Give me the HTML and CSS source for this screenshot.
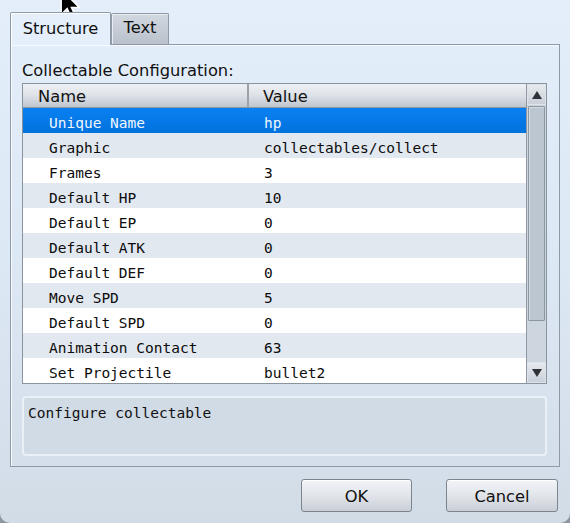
FILE: index.html
```html
<!DOCTYPE html>
<html>
<head>
<meta charset="utf-8">
<link rel="stylesheet" href="styles.css">
</head>
<body>
<div class="window">
  <div class="tabs">
    <div class="tab active">Structure</div>
    <div class="tab">Text</div>
  </div>
  <div class="panel">
    <div class="label">Collectable Configuration:</div>
    <div class="table">
      <div class="list">
        <div class="header">
          <div class="hcell name">Name</div>
          <div class="hcell value">Value</div>
        </div>
        <div class="row selected"><span class="c1">Unique Name</span><span class="c2">hp</span></div>
        <div class="row alt"><span class="c1">Graphic</span><span class="c2">collectables/collect</span></div>
        <div class="row"><span class="c1">Frames</span><span class="c2">3</span></div>
        <div class="row alt"><span class="c1">Default HP</span><span class="c2">10</span></div>
        <div class="row"><span class="c1">Default EP</span><span class="c2">0</span></div>
        <div class="row alt"><span class="c1">Default ATK</span><span class="c2">0</span></div>
        <div class="row"><span class="c1">Default DEF</span><span class="c2">0</span></div>
        <div class="row alt"><span class="c1">Move SPD</span><span class="c2">5</span></div>
        <div class="row"><span class="c1">Default SPD</span><span class="c2">0</span></div>
        <div class="row alt"><span class="c1">Animation Contact</span><span class="c2">63</span></div>
        <div class="row"><span class="c1">Set Projectile</span><span class="c2">bullet2</span></div>
      </div>
      <div class="scrollbar">
        <div class="sbtn"><svg width="12" height="10" viewBox="0 0 12 10"><path d="M6 1 L11 9 L1 9 Z" fill="#2f3338"/></svg></div>
        <div class="track"><div class="thumb"></div></div>
        <div class="sbtn"><svg width="12" height="10" viewBox="0 0 12 10"><path d="M1 1 L11 1 L6 9 Z" fill="#2f3338"/></svg></div>
      </div>
    </div>
    <div class="desc">Configure collectable</div>
  </div>
  <div class="buttons">
    <div class="btn">OK</div>
    <div class="btn">Cancel</div>
  </div>
  <svg class="cursor" width="24" height="34" viewBox="0 0 20 28"><path d="M1 1 L1 22 L6 17 L10 26 L13.5 24.5 L9.5 16 L16 16 Z" fill="#000" stroke="#fff" stroke-width="1.2" stroke-linejoin="miter"/></svg>
</div>
</body>
</html>
```

FILE: styles.css
```css
html, body {
  margin: 0;
  padding: 0;
  background: #8e969f;
}
.window {
  position: relative;
  width: 570px;
  height: 523px;
  box-sizing: border-box;
  padding: 12px 10px 0 10px;
  background: linear-gradient(to bottom, #e4eefb 0%, #dde8f5 50%, #d2dce7 100%);
  border-radius: 0 0 10px 10px;
  font-family: "DejaVu Sans", sans-serif;
  font-size: 16.3px;
  color: #111;
  overflow: hidden;
}
.tabs {
  display: flex;
  align-items: flex-end;
  height: 32px;
  position: relative;
  z-index: 1;
}
.tab {
  box-sizing: border-box;
  height: 31px;
  padding: 4px 0 0 0;
  border: 1px solid #8f9aa6;
  border-bottom: none;
  border-radius: 2px 2px 0 0;
  background: linear-gradient(to bottom, #d2d8e0, #b9c1cb);
  width: 58px;
  text-align: center;
  box-shadow: inset 1px 1px 0 #e8edf3;
}
.tab.active {
  height: 33px;
  width: 101px;
  padding-top: 6px;
  margin-bottom: -1px;
  background: #e5effb;
  box-shadow: inset 1px 1px 0 #ffffff;
}
.panel {
  box-sizing: border-box;
  height: 423px;
  width: 550px;
  border: 1px solid #8f9aa6;
  box-shadow: inset 1px 1px 0 #f6f9fd;
  padding: 16px 12px 0 11px;
}
.label {
  height: 19px;
  line-height: 19px;
  margin-bottom: 3px;
}
.table {
  display: flex;
  width: 525px;
  height: 301px;
  box-sizing: border-box;
  border: 1px solid #8a949e;
  background: #fff;
}
.list {
  flex: 1;
  font-family: "DejaVu Sans Mono", monospace;
  font-size: 14.5px;
}
.header {
  display: flex;
  height: 24px;
  box-sizing: border-box;
  border-bottom: 1px solid #8f98a2;
  background: linear-gradient(to bottom, #eef1f4 0%, #dde2e8 50%, #bfc6ce 100%);
  font-family: "DejaVu Sans", sans-serif;
  font-size: 16.3px;
}
.hcell {
  line-height: 21px;
  padding-top: 2px;
  box-sizing: border-box;
}
.hcell.name {
  width: 226px;
  padding-left: 15px;
  border-right: 2px solid #9ba3ad;
}
.hcell.value {
  flex: 1;
  padding-left: 14px;
}
.row {
  display: flex;
  height: 25px;
  box-sizing: border-box;
  padding-top: 6px;
  line-height: 19px;
  color: #0c0c0c;
}
.row.alt {
  background: #e2e8f0;
}
.row.selected {
  background: linear-gradient(to bottom, #0a80f2, #0072dc);
  color: #f2f7ff;
}
.c1 {
  width: 241px;
  padding-left: 26px;
  box-sizing: border-box;
}
.c2 {
  flex: 1;
}
.scrollbar {
  width: 19px;
  display: flex;
  flex-direction: column;
  border-left: 1px solid #8f98a2;
  background: #cdd5de;
}
.sbtn {
  height: 19px;
  display: flex;
  align-items: center;
  justify-content: center;
  background: linear-gradient(to bottom, #e6eaef, #c9d0d8);
  border: 1px solid #dfe4ea;
}
.track {
  flex: 1;
  padding: 1px 0;
}
.thumb {
  height: 215px;
  margin: 0 1px;
  box-sizing: border-box;
  border: 1px solid #8c96a1;
  border-radius: 1px;
  background: #bcc6d1;
  box-shadow: inset 1px 1px 0 #d3dae2;
}
.desc {
  margin-top: 12px;
  height: 60px;
  width: 525px;
  box-sizing: border-box;
  border: 2px solid #eaf0f6;
  border-radius: 4px;
  background: #d0dbe6;
  padding: 5px 0 0 4px;
  font-family: "DejaVu Sans Mono", monospace;
  font-size: 14.5px;
  line-height: 20px;
}
.buttons {
  display: flex;
  justify-content: flex-end;
  gap: 34px;
  padding: 12px 2px 0 0;
}
.btn {
  box-sizing: border-box;
  height: 33px;
  width: 111px;
  border: 1px solid #7c848e;
  border-radius: 3px;
  background: linear-gradient(to bottom, #f2f4f7 0%, #e1e5ea 50%, #c9cfd7 100%);
  box-shadow: inset 0 1px 0 #ffffff;
  text-align: center;
  padding-top: 1px;
  line-height: 31px;
}
.btn:last-child {
  width: 112px;
}
.cursor {
  position: absolute;
  left: 60px;
  top: -12px;
}
```
